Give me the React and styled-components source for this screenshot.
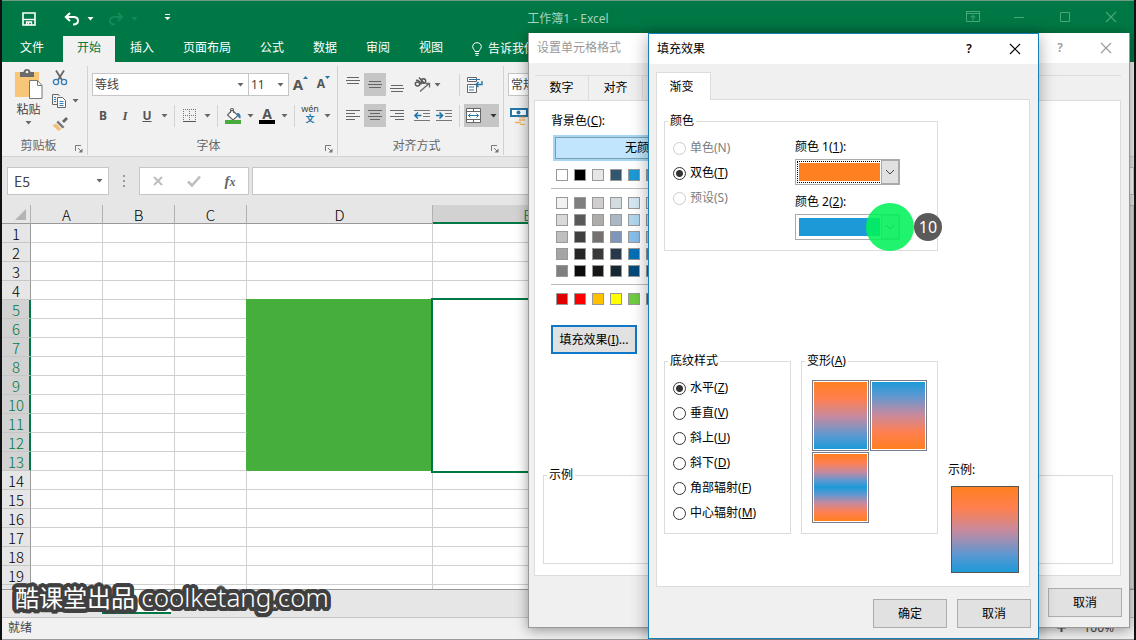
import React, { useState } from "react";
import styled, { createGlobalStyle, css } from "styled-components";

const THEME_STANDARD = ["#ffffff", "#000000", "#e7e6e6", "#33566f", "#1c9ad6", "#ff8427"];
const THEME_SHADES = [
  ["#f2f2f2", "#7f7f7f", "#d0cece", "#d3dcdf", "#d3e6f1", "#ffe6d3"],
  ["#d9d9d9", "#595959", "#aeabab", "#a9b8c4", "#afd6ee", "#ffcda8"],
  ["#bfbfbf", "#3f3f3f", "#757171", "#7e96b8", "#86bdea", "#ffb47d"],
  ["#a5a5a5", "#262626", "#3a3838", "#28394c", "#0070b8", "#dd5f00"],
  ["#7f7f7f", "#0c0c0c", "#171717", "#172731", "#004a7c", "#933f00"],
];
const STANDARD = ["#e10000", "#ff0000", "#ffc000", "#ffff00", "#70cb42", "#00904d"];

const RIBBON_TABS = ["开始", "插入", "页面布局", "公式", "数据", "审阅", "视图"];
const LAST_ROW = 19;
const ROWS = Array.from({ length: LAST_ROW + 1 }, (_, i) => i + 1);
const CELL_FILL = "#46ae3c";

const STYLES = [
  { name: "水平", hotkey: "Z" },
  { name: "垂直", hotkey: "V" },
  { name: "斜上", hotkey: "U" },
  { name: "斜下", hotkey: "D" },
  { name: "角部辐射", hotkey: "F" },
  { name: "中心辐射", hotkey: "M" },
];

const down = "#ff8020, #ff7f50 25%, #c58aa0 52%, #5b98d2 80%, #1c9ad8";
const up = "#1c9ad8, #5b98d2 20%, #c58aa0 48%, #ff7f50 75%, #ff8020";
const middle =
  "#ff8020, #ff7f50 13%, #c58aa0 27%, #5b98d2 40%, #1c9ad8 50%, #5b98d2 60%, #c58aa0 73%, #ff7f50 87%, #ff8020";

// ring of shadows, gives the caption a thick round outline
const outline = Array.from({ length: 24 }, (_, i) => {
  const a = (i / 24) * Math.PI * 2;
  return `${(Math.cos(a) * 4).toFixed(1)}px ${(Math.sin(a) * 4).toFixed(1)}px 0 #404040`;
})
  .concat(["2px 0 0 #404040", "-2px 0 0 #404040", "0 2px 0 #404040", "0 -2px 0 #404040"])
  .join(", ");

/* ---------- icons ---------- */

const Arrow = ({ color = "#666" }) => (
  <svg width="7" height="4" viewBox="0 0 7 4" aria-hidden="true">
    <path d="M0.5 0h6L3.5 3.5z" fill={color} />
  </svg>
);

const Icon = ({ w = 16, h = 16, children }) => (
  <svg width={w} height={h} viewBox={`0 0 ${w} ${h}`} fill="none" aria-hidden="true">
    {children}
  </svg>
);

const SaveIcon = () => (
  <Icon w={14} h={14}>
    <path d="M1 1h12v12H1z" stroke="#fff" strokeWidth="1.6" />
    <path d="M1 7.5h12" stroke="#fff" strokeWidth="1.4" />
    <path d="M4.5 13.5v-3.5h5v3.5M6.5 10v3" stroke="#fff" strokeWidth="1.4" />
  </Icon>
);

const UndoIcon = ({ color }) => (
  <Icon w={16} h={14}>
    <path d="M6 1L1.8 5l4.2 4M2 5h7.5c3 0 4.5 1.7 4.5 3.8S12.5 12.5 9 12.5" stroke={color} strokeWidth="2" />
  </Icon>
);

const RedoIcon = ({ color }) => (
  <Icon w={16} h={14}>
    <path d="M10 1l4.2 4-4.2 4M14 5H6.5C3.5 5 2 6.7 2 8.8s1.5 3.7 5 3.7" stroke={color} strokeWidth="2" />
  </Icon>
);

const CloseIcon = ({ color, size = 12 }) => (
  <svg width={size} height={size} viewBox="0 0 12 12" aria-hidden="true">
    <path d="M1 1l10 10M11 1L1 11" stroke={color} strokeWidth="1.1" />
  </svg>
);

const PasteIcon = () => (
  <Icon w={28} h={30}>
    <path d="M0 3h24v25H0z" fill="#f8c677" />
    <path d="M5 3h3.5c0-4 7-4 7 0H19v5H5z" fill="#6b6b6b" />
    <circle cx="12" cy="3" r="1.3" fill="#f1f1f1" />
    <path d="M14.5 11.5h8l4.5 5v13H14.5z" fill="#fff" stroke="#777" />
    <path d="M22.5 11.5v5H27" stroke="#777" />
  </Icon>
);

const CutIcon = () => (
  <Icon w={16} h={16}>
    <path d="M4 0.5l6 9.5M12 0.5L6 10" stroke="#666" strokeWidth="1.8" />
    <circle cx="4" cy="12" r="2.6" stroke="#2f7cb8" strokeWidth="1.3" />
    <circle cx="12" cy="12" r="2.6" stroke="#2f7cb8" strokeWidth="1.3" />
  </Icon>
);

const CopyIcon = () => (
  <Icon w={16} h={14}>
    <path d="M6 10.5H1.5v-10h6l1 1.5" stroke="#666" />
    <path d="M6.5 3.5h5l3 3v7h-8z" fill="#fff" stroke="#666" />
    <path d="M3 3.5h2M3 5.5h2M3 7.5h2M8.5 7.5h4M8.5 9.5h4M8.5 11.5h4" stroke="#2f7cb8" />
  </Icon>
);

const BrushIcon = () => (
  <Icon w={16} h={14}>
    <path d="M10 4l4-4 2 2-4 4z" fill="#666" />
    <path d="M6 3.5l6.5 6.5-2 1.5L4.5 5.5z" fill="#777" />
    <path d="M4 6.5l5.5 5.5L6.5 14 0.5 8.5z" fill="#f4c078" />
  </Icon>
);

const Launcher = () => (
  <Icon w={8} h={8}>
    <path d="M0.5 6V0.5H6" stroke="#777" />
    <path d="M3 3l3 3" stroke="#777" />
    <path d="M7.5 3.5v4h-4z" fill="#777" />
  </Icon>
);

const BordersIcon = () => (
  <Icon w={14} h={14}>
    <path d="M0 0.5h14M0 6.5h14M0.5 0v13M6.5 0v13M12.5 0v13" stroke="#777" strokeDasharray="1 1" />
    <path d="M0 12.5h13" stroke="#555" />
  </Icon>
);

const FillIcon = () => (
  <Icon w={16} h={16}>
    <path d="M7 2l6 5.5-5 4.5-5.5-5z" fill="#fff" stroke="#666" strokeWidth="1.2" />
    <path d="M5.5 5V1c0-1 3-1 3 0v4" stroke="#666" />
    <path d="M12 5c3 0 4 2 3.5 5.5-2 0-2.5-2-3.5-5.5z" fill="#2f7cb8" />
    <path d="M0 12h16v4H0z" fill="#46ac3c" />
  </Icon>
);

const LINES = {
  top: [[1, 0, 13], [0, 3, 14], [1, 6, 13]],
  mid: [[1, 4, 13], [0, 7, 14], [1, 10, 13]],
  low: [[1, 8, 13], [0, 11, 14], [1, 14, 13]],
  left: [[0, 2, 14], [0, 5, 9], [0, 8, 14], [0, 11, 9]],
  center: [[0, 2, 14], [2, 5, 12], [0, 8, 14], [2, 11, 12]],
  right: [[0, 2, 14], [5, 5, 14], [0, 8, 14], [5, 11, 14]],
};

const AlignIcon = ({ kind }) => (
  <Icon w={14} h={16}>
    {LINES[kind].map(([a, y, b]) => (
      <path key={y} d={`M${a} ${y + 0.5}H${b}`} stroke="#666" />
    ))}
  </Icon>
);

const IndentIcon = ({ out }) => (
  <Icon w={16} h={14}>
    <path d="M0 1.5h16M9 4.5h7M9 7.5h7M0 11.5h16" stroke="#777" />
    {out ? (
      <path d="M7.5 6.5H1M4 3.5L1 6.5l3 3" stroke="#2376a8" strokeWidth="1.7" />
    ) : (
      <path d="M0 6.5h6.5M3.5 3.5l3 3-3 3" stroke="#2376a8" strokeWidth="1.7" />
    )}
  </Icon>
);

const OrientIcon = () => (
  <Icon w={17} h={16}>
    <ellipse cx="3.5" cy="7" rx="2.2" ry="2" stroke="#555" strokeWidth="1.4" />
    <path d="M2 3.5c2-1 3 0.5 5.5 4" stroke="#555" strokeWidth="1.4" />
    <path d="M5 0.5l5.5 6" stroke="#555" strokeWidth="1.4" />
    <circle cx="9.5" cy="4" r="2.2" stroke="#555" strokeWidth="1.4" />
    <path d="M6 14.5l9-8M11.5 6.5H15.5v4" stroke="#666" strokeWidth="1.3" />
  </Icon>
);

const WrapIcon = () => (
  <Icon w={16} h={16}>
    <path d="M0.5 0.5h9v4h-9zM0.5 7.5h9v8h-9z" fill="#fff" stroke="#666" />
    <path d="M2 2.5h11M2 10h5M2 13h5" stroke="#2376a8" />
    <path d="M15 4v3.5H9M11.5 5L9 7.5l2.5 2.5" stroke="#2376a8" strokeWidth="1.4" />
  </Icon>
);

const MergeIcon = () => (
  <Icon w={16} h={16}>
    <path d="M0.5 0.5h14v14H0.5z" fill="#fff" stroke="#666" />
    <path d="M0.5 3.5h14M0.5 11.5h14M7.5 0.5v3M7.5 11.5v3" stroke="#666" />
    <path d="M2.5 7.5h10M4.5 5.5l-2 2 2 2M10.5 5.5l2 2-2 2" stroke="#2376a8" />
  </Icon>
);

const MoneyIcon = () => (
  <Icon w={18} h={18}>
    <path d="M1 2h16v7H1z" fill="#fff" stroke="#2376a8" strokeWidth="2" />
    <circle cx="8.5" cy="5.5" r="2" fill="#2376a8" />
    <path d="M9 10.5h6M9 13h6M5 15.5h6M10 17.5h5" stroke="#f0b568" strokeWidth="1.6" />
  </Icon>
);

const BulbIcon = () => (
  <Icon w={10} h={14}>
    <path d="M3 9.5C3 8 0.7 7 0.7 4.6.7 2.2 2.6.7 5 .7s4.3 1.5 4.3 3.9C9.3 7 7 8 7 9.5zM3 11.5h4M3.5 13.3h3" stroke="#fff" />
  </Icon>
);

const ChevronDown = () => (
  <Icon w={10} h={6}>
    <path d="M1 1l4 4 4-4" stroke="#444" />
  </Icon>
);

/* ---------- application window ---------- */

function TitleRow() {
  return (
    <TitleBar>
      <QuickAccess>
        <QuickButton aria-label="保存"><SaveIcon /></QuickButton>
        <QuickGap />
        <QuickButton aria-label="撤消"><UndoIcon color="#fff" /></QuickButton>
        <QuickArrow aria-label="撤消列表"><Arrow color="#fff" /></QuickArrow>
        <QuickButton aria-label="恢复"><RedoIcon color="#138a57" /></QuickButton>
        <QuickArrow aria-label="恢复列表"><Arrow color="#138a57" /></QuickArrow>
        <QuickCustom aria-label="自定义">
          <Icon w={8} h={10}>
            <path d="M1 0.5h5" stroke="#fff" />
            <path d="M0.5 3h6L3.5 6z" fill="#fff" />
          </Icon>
        </QuickCustom>
      </QuickAccess>
      <AppTitle>工作簿1 - Excel</AppTitle>
      <WindowButtons>
        <WindowButton aria-label="功能区显示选项">
          <Icon w={14} h={11}>
            <path d="M0.5 0.5h13v10H0.5zM0.5 2.5h13M7 9.5v-5M4.5 6.5L7 4.5l2.5 2" stroke="#48a87c" />
          </Icon>
        </WindowButton>
        <WindowButton aria-label="最小化">
          <Icon w={10} h={10}><path d="M0 5.5h10" stroke="#48a87c" /></Icon>
        </WindowButton>
        <WindowButton aria-label="最大化">
          <Icon w={10} h={10}><path d="M0.5 0.5h9v9h-9z" stroke="#48a87c" /></Icon>
        </WindowButton>
        <WindowButton aria-label="关闭"><CloseIcon color="#48a87c" /></WindowButton>
      </WindowButtons>
    </TitleBar>
  );
}

function Ribbon() {
  return (
    <RibbonBar>
      <ClipboardGroup>
        <ClipboardTools>
          <PasteButton>
            <PasteIcon />
            粘贴
            <Arrow />
          </PasteButton>
          <ClipboardList>
            <Tool aria-label="剪切"><CutIcon /></Tool>
            <CopyTool aria-label="复制"><CopyIcon /><Arrow /></CopyTool>
            <Tool aria-label="格式刷"><BrushIcon /></Tool>
          </ClipboardList>
        </ClipboardTools>
        <GroupLabel><span>剪贴板</span><Launcher /></GroupLabel>
      </ClipboardGroup>

      <FontGroup>
        <ToolRow>
          <Combo $width="157px">
            <select aria-label="字体"><option>等线</option></select>
            <Arrow />
          </Combo>
          <Combo $width="40px">
            <select aria-label="字号"><option>11</option></select>
            <Arrow />
          </Combo>
          <SizeTool aria-label="增大字号">
            <Letter $size="15px">A</Letter>
            <Icon w={5} h={12}><path d="M0 4h5L2.5 1z" fill="#2376a8" /></Icon>
          </SizeTool>
          <SizeTool aria-label="减小字号">
            <Letter $size="12px">A</Letter>
            <Icon w={5} h={12}><path d="M0 1h5L2.5 4z" fill="#2376a8" /></Icon>
          </SizeTool>
        </ToolRow>
        <ToolRow>
          <Tool><Letter $size="12px">B</Letter></Tool>
          <Tool><Letter $size="13px" $italic>I</Letter></Tool>
          <Tool><Letter $size="12px" $underline>U</Letter></Tool>
          <ArrowTool aria-label="下划线列表"><Arrow /></ArrowTool>
          <ToolDivider />
          <Tool aria-label="边框"><BordersIcon /></Tool>
          <ArrowTool aria-label="边框列表"><Arrow /></ArrowTool>
          <ToolDivider />
          <Tool aria-label="填充颜色"><FillIcon /></Tool>
          <ArrowTool aria-label="填充颜色列表"><Arrow /></ArrowTool>
          <Tool><ColorLetter>A</ColorLetter></Tool>
          <ArrowTool aria-label="字体颜色列表"><Arrow /></ArrowTool>
          <ToolDivider />
          <Phonetic><span>wén</span><b>文</b></Phonetic>
          <ArrowTool aria-label="拼音列表"><Arrow /></ArrowTool>
        </ToolRow>
        <GroupLabel><span>字体</span><Launcher /></GroupLabel>
      </FontGroup>

      <AlignGroup>
        <ToolRow>
          <Tool aria-label="顶端对齐"><AlignIcon kind="top" /></Tool>
          <Tool aria-label="垂直居中" $on><AlignIcon kind="mid" /></Tool>
          <Tool aria-label="底端对齐"><AlignIcon kind="low" /></Tool>
          <OrientTool aria-label="方向"><OrientIcon /><Arrow /></OrientTool>
          <ToolDivider $tall />
          <Tool aria-label="自动换行"><WrapIcon /></Tool>
        </ToolRow>
        <ToolRow>
          <Tool aria-label="左对齐"><AlignIcon kind="left" /></Tool>
          <Tool aria-label="居中" $on><AlignIcon kind="center" /></Tool>
          <Tool aria-label="右对齐"><AlignIcon kind="right" /></Tool>
          <IndentPair>
            <Tool aria-label="减少缩进量"><IndentIcon out /></Tool>
            <Tool aria-label="增加缩进量"><IndentIcon /></Tool>
          </IndentPair>
          <ToolDivider $tall />
          <MergeTool aria-label="合并后居中"><MergeIcon /><Arrow color="#333" /></MergeTool>
        </ToolRow>
        <GroupLabel><span>对齐方式</span><Launcher /></GroupLabel>
      </AlignGroup>

      <NumberGroup>
        <ToolRow>
          <Combo $width="104px">
            <select aria-label="数字格式"><option>常规</option></select>
            <Arrow />
          </Combo>
        </ToolRow>
        <ToolRow><Tool aria-label="会计数字格式"><MoneyIcon /></Tool></ToolRow>
      </NumberGroup>
    </RibbonBar>
  );
}

function Sheet() {
  return (
    <SheetArea>
      <Grid>
        <colgroup>
          <col width="29" />
          <col width="72" />
          <col width="72" />
          <col width="72" />
          <col width="186" />
          <col width="190" />
          <col />
        </colgroup>
        <thead>
          <tr>
            <Corner>
              <Icon w={12} h={12}><path d="M11 0v11H0z" fill="#b4b4b4" /></Icon>
            </Corner>
            <ColHead>A</ColHead>
            <ColHead>B</ColHead>
            <ColHead>C</ColHead>
            <ColHead>D</ColHead>
            <ColHead $selected>E</ColHead>
            <ColHead />
          </tr>
        </thead>
        <tbody>
          {ROWS.map((n) => {
            const inRange = n >= 5 && n <= 13;
            return (
              <tr key={n}>
                <RowHead scope="row" $selected={inRange}>{n <= LAST_ROW && n}</RowHead>
                <Cell />
                <Cell />
                <Cell $edge={inRange && CELL_FILL} />
                {n === 5 && <Cell rowSpan={9} $fill={CELL_FILL} />}
                {n === 5 && <ActiveCell rowSpan={9} />}
                {!inRange && <><Cell /><Cell /></>}
                <Cell />
              </tr>
            );
          })}
        </tbody>
      </Grid>
      <ScrollBar />
    </SheetArea>
  );
}

/* ---------- dialogs ---------- */

const Key = ({ children }) => <>(<u>{children}</u>)</>;

function FormatCellsDialog() {
  return (
    <FormatWindow role="dialog" aria-label="设置单元格格式">
      <DialogTitle $inactive>
        <span>设置单元格格式</span>
        <TitleButton>?</TitleButton>
        <TitleButton aria-label="关闭"><CloseIcon color="#999" /></TitleButton>
      </DialogTitle>
      <FormatTabs>
        <FormatTab>数字</FormatTab>
        <FormatTab>对齐</FormatTab>
      </FormatTabs>
      <FormatPanel>
        <FormatBody>
          <span>背景色<Key>C</Key>:</span>
          <NoColor>无颜色</NoColor>
          <SwatchRow>
            {THEME_STANDARD.map((c) => <Swatch key={c} aria-label={c} $color={c} />)}
          </SwatchRow>
          <Rule />
          <SwatchGrid>
            {THEME_SHADES.map((row, i) => (
              <SwatchRow key={i}>
                {row.map((c) => <Swatch key={c} aria-label={c} $color={c} />)}
              </SwatchRow>
            ))}
          </SwatchGrid>
          <Rule />
          <SwatchRow>
            {STANDARD.map((c) => <Swatch key={c} aria-label={c} $color={c} />)}
          </SwatchRow>
          <FillEffects>填充效果<Key>I</Key>...</FillEffects>
        </FormatBody>
        <FormatSample><legend>示例</legend></FormatSample>
      </FormatPanel>
      <FormatFooter><PushButton>取消</PushButton></FormatFooter>
    </FormatWindow>
  );
}

function FillEffectsDialog() {
  const [mode, setMode] = useState("two");
  const [style, setStyle] = useState("Z");

  return (
    <FillWindow role="dialog" aria-label="填充效果">
      <DialogTitle>
        <span>填充效果</span>
        <TitleButton>?</TitleButton>
        <TitleButton aria-label="关闭"><CloseIcon color="#000" /></TitleButton>
      </DialogTitle>
      <FillTab>渐变</FillTab>
      <FillPanel>
        <ColorBox>
          <legend>颜色</legend>
          <ColorColumns>
            <RadioList>
              <RadioLabel $disabled>
                <input type="radio" name="mode" disabled />
                <span>单色(N)</span>
              </RadioLabel>
              <RadioLabel>
                <input type="radio" name="mode" checked={mode === "two"} onChange={() => setMode("two")} />
                <span>双色<Key>T</Key></span>
              </RadioLabel>
              <RadioLabel $disabled>
                <input type="radio" name="mode" disabled />
                <span>预设(S)</span>
              </RadioLabel>
            </RadioList>
            <ColorPickers>
              <label htmlFor="color1">颜色 1<Key>1</Key>:</label>
              <ColorSelect $color="#ff8020" $focused>
                <select id="color1"><option value="orange" aria-label="橙色" /></select>
                <i><ChevronDown /></i>
              </ColorSelect>
              <label htmlFor="color2">颜色 2<Key>2</Key>:</label>
              <ColorSelect $color="#1c9ad8">
                <select id="color2"><option value="blue" aria-label="蓝色" /></select>
                <i><ChevronDown /></i>
                <ClickSpot />
                <StepBadge>10</StepBadge>
              </ColorSelect>
            </ColorPickers>
          </ColorColumns>
        </ColorBox>
        <LowerRow>
          <GroupBox>
            <legend>底纹样式</legend>
            <RadioList>
              {STYLES.map((s) => (
                <RadioLabel key={s.hotkey}>
                  <input
                    type="radio"
                    name="style"
                    checked={style === s.hotkey}
                    onChange={() => setStyle(s.hotkey)}
                  />
                  <span>{s.name}<Key>{s.hotkey}</Key></span>
                </RadioLabel>
              ))}
            </RadioList>
          </GroupBox>
          <GroupBox>
            <legend>变形<Key>A</Key></legend>
            <Variants>
              <Variant aria-label="变形 1" $stops={down} />
              <Variant aria-label="变形 2" $stops={up} />
              <Variant aria-label="变形 3" $stops={middle} />
            </Variants>
          </GroupBox>
          <SampleColumn>
            <span>示例:</span>
            <SampleBox />
          </SampleColumn>
        </LowerRow>
      </FillPanel>
      <FillFooter>
        <PushButton>确定</PushButton>
        <PushButton>取消</PushButton>
      </FillFooter>
    </FillWindow>
  );
}

export default function App() {
  return (
    <>
      <GlobalStyle />
      <Desktop>
        <GreenHeader>
          <TitleRow />
          <TabRow>
            <FileTab>文件</FileTab>
            {RIBBON_TABS.map((t, i) => <RibbonTab key={t} $active={i === 0}>{t}</RibbonTab>)}
            <TellMe><BulbIcon />告诉我你想要做什么</TellMe>
          </TabRow>
        </GreenHeader>
        <Ribbon />
        <FormulaBar>
          <NameBox>
            <input aria-label="名称框" defaultValue="E5" />
            <Arrow />
          </NameBox>
          <Dots>
            <Icon w={2} h={12}><path d="M1 0v2M1 5v2M1 10v2" stroke="#999" strokeWidth="2" /></Icon>
          </Dots>
          <FormulaTools>
            <button aria-label="取消输入">
              <Icon w={12} h={12}><path d="M2 2l8 8M10 2l-8 8" stroke="#bdbdbd" strokeWidth="2" /></Icon>
            </button>
            <button aria-label="输入">
              <Icon w={14} h={12}><path d="M1 6.5l4 4L13 1.5" stroke="#bdbdbd" strokeWidth="2.5" /></Icon>
            </button>
            <button><em>f<small>x</small></em></button>
          </FormulaTools>
          <FormulaInput aria-label="编辑栏" />
        </FormulaBar>
        <Sheet />
        <SheetTabs><SheetTab>Sheet1</SheetTab></SheetTabs>
        <StatusBar>
          <span>就绪</span>
          <ZoomIn aria-label="放大">
            <Icon w={9} h={9}><path d="M0 4.5h9M4.5 0v9" stroke="#555" strokeWidth="2" /></Icon>
          </ZoomIn>
          <span>100%</span>
        </StatusBar>
        <FormatCellsDialog />
        <FillEffectsDialog />
        <Watermark>酷课堂出品 <span>coolketang.com</span></Watermark>
      </Desktop>
    </>
  );
}

/* ---------- styles ---------- */

const GlobalStyle = createGlobalStyle`
  * {
    box-sizing: border-box;
  }
  body {
    margin: 0;
    font: 12px/18px "Noto Sans", "Noto Sans CJK SC", sans-serif;
    color: #000;
  }
  button, input, select {
    font: inherit;
    color: inherit;
    margin: 0;
    padding: 0;
    border: 0;
    border-radius: 0;
    background: none;
    outline: none;
  }
  svg {
    display: block;
    flex: none;
  }
`;

const Desktop = styled.div`
  position: relative;
  display: flex;
  flex-direction: column;
  height: 100vh;
  overflow: hidden;
  border: solid #111;
  border-width: 0 2px;
  background: #e6e6e6;
`;

const GreenHeader = styled.header`
  background: #007845;
  border-top: 1px solid #6c9c84;
  color: #fff;
`;

const TitleBar = styled.div`
  display: grid;
  grid-template-columns: 1fr auto 1fr;
  align-items: center;
  height: 35px;
`;

const QuickAccess = styled.div`
  display: flex;
  align-items: center;
  padding-left: 16px;
`;

const QuickButton = styled.button`
  display: flex;
  justify-content: center;
  width: 22px;
`;

const QuickGap = styled.span`
  width: 21px;
`;

const QuickArrow = styled.button`
  display: flex;
  justify-content: center;
  width: 22px;
  padding-right: 8px;
`;

const QuickCustom = styled(QuickButton)`
  margin-left: 8px;
`;

const AppTitle = styled.span`
  color: #a5d3bd;
`;

const WindowButtons = styled.div`
  display: flex;
  justify-content: flex-end;
  padding-bottom: 4px;
`;

const WindowButton = styled.button`
  display: flex;
  align-items: center;
  justify-content: center;
  width: 46px;
  height: 30px;
`;

const TabRow = styled.nav`
  display: flex;
  gap: 1px;
  height: 26px;
`;

const RibbonTab = styled.button`
  padding: 0 14px 2px;
  white-space: nowrap;
  ${(p) =>
    p.$active &&
    css`
      background: #f1f1f1;
      color: #007845;
    `}
`;

const FileTab = styled(RibbonTab)`
  width: 60px;
`;

const TellMe = styled.button`
  display: flex;
  align-items: center;
  gap: 6px;
  margin-left: 14px;
  white-space: nowrap;
`;

const RibbonBar = styled.div`
  display: flex;
  height: 95px;
  padding-top: 4px;
  background: #f1f1f1;
  border-bottom: 1px solid #d2d2d2;
  color: #444;
`;

const RibbonGroup = styled.section`
  display: flex;
  flex-direction: column;
  height: 89px;
  border-right: 1px solid #d2d2d2;
`;

const ClipboardGroup = styled(RibbonGroup)`
  width: 86px;
`;

const FontGroup = styled(RibbonGroup)`
  width: 250px;
  padding: 7px 0 0 4px;
  gap: 8px;
`;

const AlignGroup = styled(RibbonGroup)`
  width: 166px;
  padding: 7px 0 0 4px;
  gap: 8px;
`;

const NumberGroup = styled(RibbonGroup)`
  padding: 7px 0 0 4px;
  gap: 8px;
`;

const GroupLabel = styled.div`
  display: flex;
  align-items: center;
  margin-top: auto;
  padding-right: 4px;
  color: #666;
  span {
    flex: 1;
    text-align: center;
  }
  svg {
    margin-top: 6px;
  }
`;

const ClipboardTools = styled.div`
  display: flex;
`;

const PasteButton = styled.button`
  display: flex;
  flex-direction: column;
  align-items: center;
  gap: 2px;
  width: 47px;
  padding: 3px 0 0 6px;
`;

const ClipboardList = styled.div`
  display: flex;
  flex-direction: column;
`;

const Tool = styled.button`
  display: flex;
  align-items: center;
  justify-content: center;
  width: 22px;
  height: 23px;
  background: ${(p) => (p.$on ? "#c6c6c6" : "none")};
`;

const CopyTool = styled(Tool)`
  gap: 5px;
  width: 33px;
  padding-left: 2px;
  justify-content: flex-start;
`;

const ArrowTool = styled(Tool)`
  width: 12px;
`;

const OrientTool = styled(Tool)`
  gap: 3px;
  width: 51px;
  padding-right: 12px;
`;

const IndentPair = styled.div`
  display: flex;
  width: 51px;
  padding-left: 3px;
`;

const MergeTool = styled(Tool)`
  gap: 8px;
  width: 35px;
  background: #c6c6c6;
`;

const SizeTool = styled(Tool)`
  align-items: flex-start;
  width: 23px;
  padding-top: 2px;
`;

const ToolRow = styled.div`
  display: flex;
  height: 23px;
`;

const ToolDivider = styled.span`
  align-self: center;
  width: 1px;
  height: 22px;
  margin: ${(p) => (p.$tall ? "0 4px 0 0" : "0 4px")};
  background: #d2d2d2;
`;

const Combo = styled.div`
  display: flex;
  align-items: center;
  width: ${(p) => p.$width};
  height: 23px;
  padding-right: 4px;
  border: 1px solid #c6c6c6;
  background: #fff;
  & + & {
    border-left: 0;
  }
  select {
    flex: 1;
    min-width: 0;
    height: 21px;
    padding-left: 2px;
    appearance: none;
  }
`;

const Letter = styled.span`
  color: #555;
  font-size: ${(p) => p.$size};
  font-weight: 700;
  ${(p) => p.$italic && `font-family: "Liberation Serif", serif; font-style: italic;`}
  ${(p) => p.$underline && `text-decoration: underline;`}
`;

const ColorLetter = styled.span`
  width: 16px;
  border-bottom: 4px solid #000;
  color: #555;
  font-size: 14px;
  font-weight: 700;
  line-height: 13px;
`;

const Phonetic = styled.button`
  display: flex;
  flex-direction: column;
  align-items: center;
  width: 22px;
  font-size: 9px;
  line-height: 10px;
  b {
    color: #2376a8;
  }
`;

const FormulaBar = styled.div`
  display: flex;
  height: 48px;
  padding: 10px 0 10px 5px;
`;

const NameBox = styled.div`
  display: flex;
  align-items: center;
  width: 102px;
  padding: 0 5px 0 6px;
  border: 1px solid #c6c6c6;
  background: #fff;
  font-size: 14px;
  color: #444;
  font-family: "Noto Sans CJK SC", sans-serif;
  input {
    flex: 1;
    min-width: 0;
  }
`;

const Dots = styled.span`
  display: flex;
  align-items: center;
  justify-content: center;
  width: 30px;
`;

const FormulaTools = styled.div`
  display: flex;
  align-items: center;
  width: 110px;
  margin-right: 3px;
  border: 1px solid #c6c6c6;
  background: #fff;
  button {
    display: flex;
    flex: 1;
    justify-content: center;
  }
  em {
    font: italic 700 15px "Liberation Serif", serif;
    color: #666;
  }
  small {
    font-size: 12px;
  }
`;

const FormulaInput = styled.input`
  flex: 1;
  border: 1px solid #c6c6c6;
  background: #fff;
`;

const SheetArea = styled.main`
  display: flex;
  flex: 1;
  min-height: 0;
  overflow: hidden;
  border-bottom: 1px solid #999;
`;

const Grid = styled.table`
  flex: 1;
  align-self: flex-start;
  table-layout: fixed;
  border-spacing: 0;
  background: #fff;
  font: 300 15px/17px "Noto Sans CJK SC", sans-serif;
  th,
  td {
    height: 19px;
    padding: 1px 0 0;
    font-weight: 300;
  }
`;

const ColHead = styled.th`
  border-right: 1px solid #b1b1b1;
  border-bottom: 1px solid #999;
  background: #e6e6e6;
  ${(p) =>
    p.$selected &&
    css`
      background: #d2d2d2;
      color: #007845;
      box-shadow: inset 0 -1px #007845;
      border-bottom-color: #007845;
    `}
`;

const Corner = styled(ColHead)`
  svg {
    margin: 0 3px 0 auto;
  }
`;

const RowHead = styled.th`
  border-right: 1px solid #999;
  border-bottom: 1px solid #c6c6c6;
  background: #e6e6e6;
  ${(p) =>
    p.$selected &&
    css`
      background: #d2d2d2;
      color: #007845;
      border-right-color: #007845;
      box-shadow: inset -1px 0 #007845;
    `}
`;

const Cell = styled.td`
  border-right: 1px solid ${(p) => p.$edge || "#d0d0d0"};
  border-bottom: 1px solid #d0d0d0;
  ${(p) =>
    p.$fill &&
    css`
      background: ${p.$fill};
      border-color: ${p.$fill};
      box-shadow: -1px -1px ${p.$fill};
    `}
`;

const ActiveCell = styled.td`
  outline: 2px solid #007845;
`;

const ScrollBar = styled.div`
  width: 20px;
  border: 1px solid #bbb;
  background: #ddd;
`;

const SheetTabs = styled.div`
  display: flex;
  height: 27px;
  padding: 0 0 3px 100px;
  background: #e6e6e6;
`;

const SheetTab = styled.button`
  width: 69px;
  border-bottom: 2px solid #007845;
  background: #fff;
  color: #007845;
`;

const StatusBar = styled.footer`
  display: flex;
  align-items: center;
  height: 23px;
  padding: 0 20px 2px 6px;
  border-top: 1px solid #c6c6c6;
  border-bottom: 1px solid #999;
  background: #f1f1f1;
  color: #444;
  span:first-child {
    flex: 1;
  }
`;

const ZoomIn = styled.button`
  margin-right: 17px;
`;

const Dialog = styled.div`
  position: absolute;
  top: 33px;
  display: flex;
  flex-direction: column;
  background: #f0f0f0;
`;

const FormatWindow = styled(Dialog)`
  left: 526px;
  width: 602px;
  height: 595px;
  border: 1px solid #999;
  border-top: 0;
  box-shadow: 0 2px 12px rgba(0, 0, 0, 0.4);
`;

const FillWindow = styled(Dialog)`
  left: 646px;
  width: 391px;
  height: 606px;
  border: 1px solid #1880b8;
  box-shadow: 0 3px 16px rgba(0, 0, 0, 0.35);
`;

const DialogTitle = styled.div`
  display: flex;
  align-items: center;
  flex: none;
  height: 30px;
  padding-left: 8px;
  background: #fff;
  color: ${(p) => (p.$inactive ? "#999" : "#000")};
  span {
    flex: 1;
  }
`;

const TitleButton = styled.button`
  display: flex;
  align-items: center;
  justify-content: center;
  width: 46px;
  height: 30px;
  font-weight: 600;
`;

const FormatTabs = styled.div`
  display: flex;
  flex: none;
  margin: 12px 8px 0 6px;
  border-top: 1px solid #ddd;
`;

const FormatTab = styled.button`
  width: 54px;
  height: 24px;
  border-right: 1px solid #dcdcdc;
`;

const FormatPanel = styled.div`
  display: flex;
  flex: none;
  flex-direction: column;
  justify-content: space-between;
  height: 476px;
  margin: 0 8px 0 5px;
  padding: 11px 7px 11px 8px;
  border: 1px solid #dcdcdc;
  background: #fff;
`;

const FormatBody = styled.div`
  display: flex;
  flex-direction: column;
  align-items: flex-start;
  width: 184px;
  padding-left: 8px;
`;

const NoColor = styled.button`
  width: 180px;
  height: 26px;
  margin: 5px 0 8px 2px;
  border: 2px solid #a6d8f5;
  outline: 1px solid #7a9db0;
  outline-offset: -3px;
  background: #c0e5fc;
`;

const SwatchRow = styled.div`
  display: flex;
  gap: 6px;
  padding-left: 5px;
`;

const SwatchGrid = styled.div`
  display: grid;
  gap: 5px;
`;

const Swatch = styled.button`
  width: 12px;
  height: 12px;
  border: 1px solid #999;
  background: ${(p) => p.$color};
`;

const Rule = styled.div`
  width: 184px;
  height: 1px;
  margin: 7px 0 8px;
  background: #bbb;
`;

const FillEffects = styled.button`
  width: 86px;
  height: 29px;
  margin-top: 20px;
  border: 2px solid #1078c8;
  background: #e1e1e1;
`;

const GroupBox = styled.fieldset`
  min-width: 0;
  margin: 0;
  padding: 0;
  border: 1px solid #dcdcdc;
  legend {
    margin-left: 3px;
    padding: 0 2px;
  }
`;

const FormatSample = styled(GroupBox)`
  height: 98px;
`;

const FormatFooter = styled.div`
  display: flex;
  justify-content: flex-end;
  padding: 12px 7px 0;
`;

const PushButton = styled.button`
  width: 74px;
  height: 29px;
  border: 1px solid #adadad;
  background: #e1e1e1;
`;

const FillTab = styled.button`
  width: 55px;
  height: 28px;
  margin: 8px 0 -1px 7px;
  padding-right: 4px;
  border: 1px solid #dcdcdc;
  border-bottom: 0;
  background: #fff;
  z-index: 1;
`;

const FillPanel = styled.div`
  display: flex;
  flex-direction: column;
  justify-content: space-between;
  height: 488px;
  margin: 0 8px 0 7px;
  padding: 12px 9px 13px 7px;
  border: 1px solid #dcdcdc;
  background: #fff;
`;

const ColorBox = styled(GroupBox)`
  width: 274px;
  height: 139px;
`;

const ColorColumns = styled.div`
  display: grid;
  grid-template-columns: 130px 105px;
`;

const RadioList = styled.div`
  display: flex;
  flex-direction: column;
  gap: 7px;
  padding: 9px 0 0 8px;
`;

const RadioLabel = styled.label`
  display: flex;
  align-items: center;
  gap: 4px;
  height: 18px;
  color: ${(p) => (p.$disabled ? "#7d7d7d" : "#000")};
  input {
    width: 13px;
    height: 13px;
    appearance: none;
    border: 1px solid #333;
    border-radius: 50%;
    background: #fff;
  }
  input:checked {
    background: radial-gradient(circle, #333 3px, #fff 4px);
  }
  input:disabled {
    border-color: #ccc;
  }
`;

const ColorPickers = styled.div`
  display: flex;
  flex-direction: column;
  padding-top: 8px;
  label {
    margin-bottom: 3px;
  }
`;

const ColorSelect = styled.div`
  position: relative;
  display: flex;
  width: 105px;
  height: 26px;
  margin-bottom: 8px;
  padding: 1px;
  border: 1px solid #aaa;
  background: #fff;
  select {
    flex: 1;
    appearance: none;
    padding: 1px;
    border: 1px ${(p) => (p.$focused ? "dotted #000" : "solid #fff")};
    background: ${(p) => p.$color} content-box;
  }
  i {
    display: flex;
    align-items: center;
    justify-content: center;
    width: 18px;
    margin: -1px;
    border: 1px solid #aaa;
    background: #e1e1e1;
    pointer-events: none;
  }
`;

const ClickSpot = styled.span`
  position: absolute;
  top: -12px;
  right: -15px;
  width: 48px;
  height: 48px;
  border-radius: 50%;
  background: rgba(0, 242, 88, 0.88);
`;

const StepBadge = styled.span`
  position: absolute;
  top: -2px;
  right: -43px;
  width: 28px;
  height: 28px;
  border-radius: 50%;
  background: #5a5a5a;
  color: #fff;
  font-size: 16px;
  line-height: 28px;
  text-align: center;
`;

const LowerRow = styled.div`
  display: grid;
  grid-template-columns: 127px 137px 1fr;
  gap: 10px;
  height: 221px;
  ${GroupBox} {
    height: 182px;
  }
`;

const Variants = styled.div`
  display: grid;
  grid-template-columns: 57px 57px;
  gap: 1px;
  padding: 10px 0 0 10px;
`;

const Variant = styled.button`
  height: 71px;
  padding: 1px;
  border: 1px solid #777b8a;
  background: linear-gradient(${(p) => p.$stops}) content-box;
`;

const SampleColumn = styled.div`
  display: flex;
  flex-direction: column;
  justify-content: flex-end;
  gap: 7px;
`;

const SampleBox = styled.div`
  width: 68px;
  height: 87px;
  margin-left: 3px;
  border: 1px solid #555;
  background: linear-gradient(${down});
`;

const FillFooter = styled.div`
  display: flex;
  justify-content: flex-end;
  gap: 10px;
  padding: 12px 7px 0;
`;

const Watermark = styled.div`
  position: absolute;
  bottom: 24px;
  left: 13px;
  color: #fff;
  font: 24px/36px "Noto Sans", "Noto Sans CJK SC", sans-serif;
  white-space: nowrap;
  text-shadow: ${outline};
  span {
    font-size: 26px;
    font-weight: 300;
  }
`;
